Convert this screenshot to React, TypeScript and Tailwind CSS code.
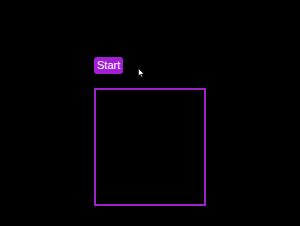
import React from 'react';

const App: React.FC = () => {
  return (
    <div className="w-[300px] h-[226px] bg-black overflow-hidden relative" style={{ fontFamily: '"Liberation Sans", Arial, sans-serif' }}>
      <div className="pl-[94px] pt-[57px] flex flex-col items-start gap-[14px]">
        <button className="h-[17px] px-[3px] rounded-[3px] bg-[#a21fd6] text-white text-[11px] leading-[17px]">
          Start
        </button>
        <div className="w-[112px] h-[118px] border-2 border-[#9c22c9]" />
      </div>
      {/* mouse pointer */}
      <svg className="absolute left-[138px] top-[68px]" width="7" height="10" viewBox="0 0 7 10">
        <path d="M0.5 0.5 L0.5 8 L2.3 6.3 L3.6 9.3 L4.7 8.8 L3.5 6 L6 6 Z" fill="white" stroke="black" strokeWidth="0.6" />
      </svg>
    </div>
  );
};

export default App;
